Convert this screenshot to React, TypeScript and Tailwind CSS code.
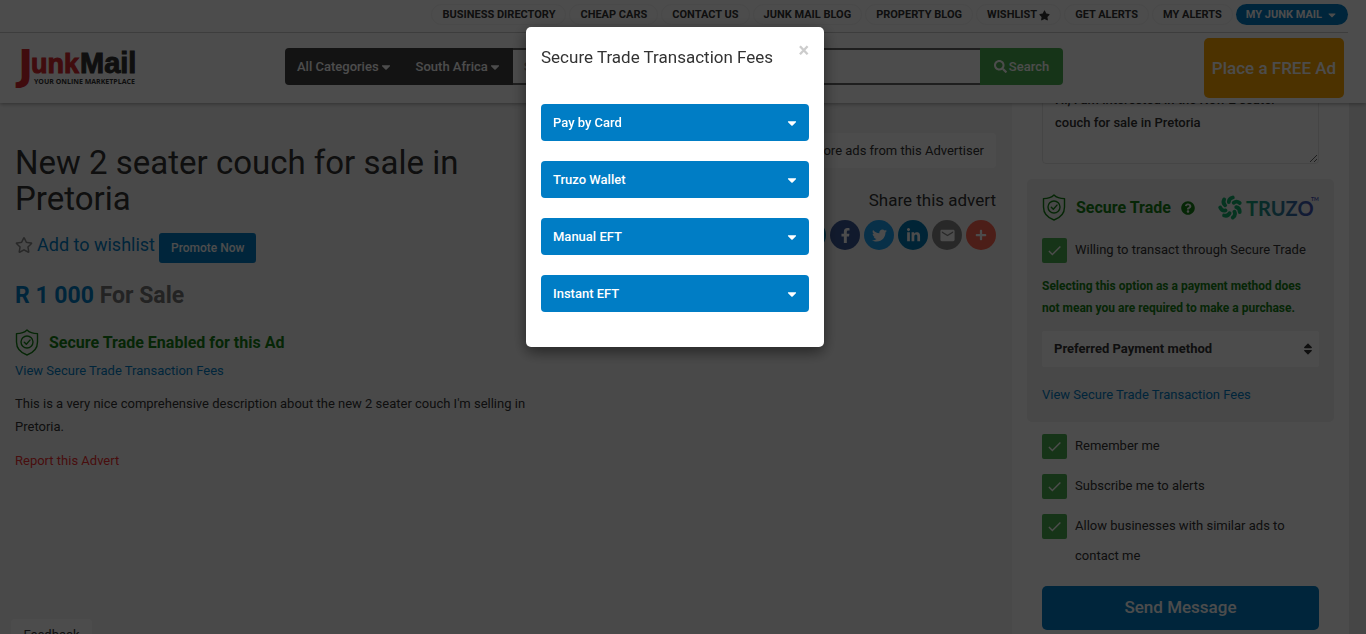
import type { ReactNode } from 'react';
import { FaCaretDown, FaFacebookF, FaFacebookMessenger, FaLinkedinIn, FaPlus, FaQuestionCircle, FaRegStar, FaSearch, FaSort, FaStar, FaTwitter } from 'react-icons/fa';
import { MdCheck, MdEmail } from 'react-icons/md';

const NAV = ['Business Directory', 'Cheap Cars', 'Contact Us', 'Junk Mail Blog', 'Property Blog', 'Wishlist', 'Get Alerts', 'My Alerts'];

const FEES = ['Pay by Card', 'Truzo Wallet', 'Manual EFT', 'Instant EFT'];

const SHARE: { label: string; bg: string; icon: ReactNode }[] = [
  { label: 'Messenger', bg: 'bg-[#0084b4]', icon: <FaFacebookMessenger size={16} /> },
  { label: 'Facebook',  bg: 'bg-[#3b5998]', icon: <FaFacebookF size={15} /> },
  { label: 'Twitter',   bg: 'bg-[#1da1f2]', icon: <FaTwitter size={15} /> },
  { label: 'LinkedIn',  bg: 'bg-[#007bb5]', icon: <FaLinkedinIn size={15} /> },
  { label: 'Email',     bg: 'bg-[#888888]', icon: <MdEmail size={17} /> },
  { label: 'More',      bg: 'bg-[#ff6550]', icon: <FaPlus size={12} /> },
];

function Logo() {
  return (
    <svg width="126" height="42" viewBox="0 0 126 42" role="img" aria-label="JunkMail">
      <text x="4" y="32" fontSize="41" fontWeight="700" fill="#d7282f" fontFamily="'DejaVu Sans', sans-serif">J</text>
      <g fontFamily="'Liberation Sans', sans-serif" fontWeight="700" strokeWidth="1">
        <text x="17" y="26" fontSize="27" fill="#d7282f" stroke="#d7282f">unk</text>
        <text x="66" y="26" fontSize="29" fill="#333" stroke="#333">Mail</text>
      </g>
      <text x="20" y="37" fontSize="7" fontWeight="700" fill="#333" fontFamily="'Open Sans', sans-serif">YOUR ONLINE MARKETPLACE</text>
    </svg>
  );
}

function Shield() {
  return (
    <svg width="24" height="27" viewBox="0 0 24 27" fill="none" stroke="#148014" strokeWidth="1.4" strokeLinecap="round" strokeLinejoin="round">
      <path d="M12 1c2.500 2.600 6.200 3.600 10.500 3.600V13c0 6.500-4.300 10.800-10.500 13C5.800 23.800 1.500 19.500 1.500 13V4.600C5.800 4.600 9.500 3.600 12 1Z" />
      <circle cx="12" cy="13" r="6" />
      <path d="m9.300 13.300 2 2 3.700-4.200" />
    </svg>
  );
}

function TruzoLogo() {
  return (
    <svg width="101" height="25" viewBox="0 0 101 25" role="img" aria-label="Truzo">
      <defs>
        <linearGradient id="truzo" x1="0" x2="1">
          <stop offset="0" stopColor="#12a878" />
          <stop offset="1" stopColor="#4350b8" />
        </linearGradient>
      </defs>
      <g stroke="#12b06c" strokeWidth="3.800" strokeLinecap="round" fill="none">
        {[0, 51, 103, 154, 206, 257, 309].map(a => (
          <path key={a} d="M10.800 7C10.800 4.600 12.300 3 14.800 2.500" transform={`rotate(${a} 12.5 12.5)`} />
        ))}
      </g>
      <text x="28" y="21" fontSize="20" fontWeight="700" fill="url(#truzo)" fontFamily="Lato, sans-serif">TRUZO</text>
      <text x="93" y="6" fontSize="5" fontWeight="700" fill="#4350b8" fontFamily="Lato, sans-serif">TM</text>
    </svg>
  );
}

function Check({ children }: { children: ReactNode }) {
  return (
    <label className="flex items-start gap-2 text-[13px] leading-[30px]">
      <span className="grid shrink-0 place-items-center">
        <input type="checkbox" defaultChecked className="col-start-1 row-start-1 size-[25px] appearance-none rounded-xs bg-[#4caf50]" />
        <MdCheck size={17} className="pointer-events-none col-start-1 row-start-1 text-white" />
      </span>
      <span className="-mt-[3px]">{children}</span>
    </label>
  );
}

function Header() {
  return (
    <header className="relative z-10 h-[103px] shrink-0 bg-white pr-[18px] shadow-[0_1px_4px_rgba(0,0,0,0.35)]">
      <nav className="flex h-[33px] items-start justify-end gap-[3px] border-b border-[#ccc] pt-1 text-[11px] font-bold uppercase">
        {NAV.map(item => (
          <a key={item} href="#" className="flex h-[21px] items-center gap-[2px] rounded-full border border-[#f3f3f3] px-[10px] pt-px">
            {item}
            {item === 'Wishlist' && <FaStar size={11} />}
          </a>
        ))}
        <button className="flex h-[21px] items-center gap-1 rounded-full bg-[#007dc5] px-[10px] pt-px font-bold uppercase text-white">
          My Junk Mail <FaCaretDown size={12} />
        </button>
      </nav>

      <div className="flex items-start">
        <a href="#" className="ml-[14px] mt-[14px] w-[271px] shrink-0"><Logo /></a>
        <form className="mt-[15px] flex h-[37px] w-[778px] overflow-hidden rounded-sm text-[13px] font-medium">
          <button type="button" className="flex items-center bg-[#404040] pl-3 text-white">All Categories <FaCaretDown size={14} /></button>
          <button type="button" className="flex items-center bg-[#404040] pl-[23px] pr-[11px] text-white">South Africa <FaCaretDown size={14} /></button>
          <input aria-label="Search" placeholder="Search for..." className="min-w-0 flex-1 border-y-2 border-[#666] bg-white px-[11px] placeholder:text-[#999]" />
          <button type="button" className="flex w-[83px] items-center justify-center gap-[2px] bg-[#4caf50] text-white"><FaSearch size={13} />Search</button>
        </form>
        <button className="ml-auto mr-1 mt-[5px] h-[60px] w-[140px] rounded-[5px] bg-[#ffa700] pt-px text-[17px] font-medium text-white">Place a FREE Ad</button>
      </div>
    </header>
  );
}

function Advert() {
  return (
    <main className="flex min-w-0 flex-1 justify-between pl-[15px] pr-4">
      <div className="w-[524px] pt-[42px]">
        <h1 className="text-[33px] leading-9">New 2 seater couch for sale in Pretoria</h1>
        <div className="mt-4 flex items-start gap-1">
          <a href="#" className="flex items-center gap-1 text-[18px] leading-6 text-[#007dc5]">
            <FaRegStar size={18} className="text-[#888]" /> Add to wishlist
          </a>
          <button className="h-[30px] rounded-[3px] bg-[#007dc5] px-3 text-[12px] font-medium text-white">Promote Now</button>
        </div>
        <p className="mt-[17px] text-[23px] font-bold leading-8 text-[#777]"><span className="text-[#007dc5]">R 1 000</span> For Sale</p>
        <div className="mt-4 flex items-center gap-[10px] text-[16px] font-bold leading-7 text-[#148014]">
          <Shield /> <span className="pt-px">Secure Trade Enabled for this Ad</span>
        </div>
        <a href="#" className="mt-[2px] block text-[13px] leading-[23px] text-[#007dc5]">View Secure Trade Transaction Fees</a>
        <p className="mt-[10px] text-[13px] leading-[23px]">This is a very nice comprehensive description about the new 2 seater couch I'm selling in Pretoria.</p>
        <a href="#" className="mt-[11px] block text-[13px] leading-[23px] text-[#f03030]">Report this Advert</a>
      </div>

      <div className="flex flex-col items-end pt-[30px]">
        <a href="#" className="rounded-sm bg-white px-3 text-[13px] leading-[35px]">More ads from this Advertiser</a>
        <h2 className="mt-5 text-[17px] leading-6">Share this advert</h2>
        <div className="mt-2 flex gap-1">
          {SHARE.map(s => (
            <button key={s.label} aria-label={s.label} className={`grid size-[30px] place-items-center rounded-full text-white ${s.bg}`}>{s.icon}</button>
          ))}
        </div>
      </div>
    </main>
  );
}

function ContactForm() {
  return (
    <aside className="w-[337px] shrink-0 bg-white px-[15px]">
      {/* first line of the message is scrolled under the header */}
      <div className="-mt-5 px-[15px]">
        <textarea
          aria-label="Message"
          defaultValue="Hi, I am interested in the New 2 seater couch for sale in Pretoria"
          className="block h-[81px] w-full rounded-sm border border-[#e8e8e8] px-3 pt-1 text-[13px] font-medium leading-[23px]"
        />
      </div>

      <section className="mt-[15px] rounded-[5px] bg-[#f0f0f0] px-[15px] pb-4 pt-[15px]">
        <div className="flex items-center text-[16px] font-bold text-[#148014]">
          <Shield />
          <span className="ml-[10px] pt-px">Secure Trade</span>
          <FaQuestionCircle size={14} className="ml-[10px]" />
          <span className="ml-auto"><TruzoLogo /></span>
        </div>
        <div className="mt-[17px]"><Check>Willing to transact through Secure Trade</Check></div>
        <p className="mt-[10px] text-[12px] font-bold leading-[22px] text-[#148014]">Selecting this option as a payment method does not mean you are required to make a purchase.</p>
        <div className="mt-3 grid items-center">
          <select aria-label="Preferred Payment method" className="col-start-1 row-start-1 h-9 w-full appearance-none rounded-xs bg-white px-3 text-[13px] font-bold">
            <option>Preferred Payment method</option>
          </select>
          <FaSort size={14} className="pointer-events-none col-start-1 row-start-1 mr-1 justify-self-end" />
        </div>
        <a href="#" className="mt-4 block text-[13px] leading-[23px] text-[#007dc5]">View Secure Trade Transaction Fees</a>
      </section>

      <div className="mt-3 flex flex-col gap-[13px] px-[15px]">
        <Check>Remember me</Check>
        <Check>Subscribe me to alerts</Check>
        <Check>Allow businesses with similar ads to contact me</Check>
        <button className="mt-[2px] h-11 rounded-[5px] bg-[#007dc5] text-[17px] font-medium text-white">Send Message</button>
      </div>
    </aside>
  );
}

function FeesModal() {
  return (
    <div className="fixed inset-0 z-30 flex items-start justify-center bg-black/70 pr-4 pt-[27px]">
      <div role="dialog" aria-label="Secure Trade Transaction Fees" className="w-[298px] rounded-[5px] bg-white px-[15px] pb-[35px] pt-[15px] shadow-[0_5px_15px_rgba(0,0,0,0.5)]">
        <div className="flex items-start justify-between">
          <h2 className="pt-[3px] text-[17px] leading-6">Secure Trade Transaction Fees</h2>
          <button aria-label="Close" className="text-[20px] font-bold leading-4 text-[#ccc]">×</button>
        </div>
        <div className="mt-[35px] flex flex-col gap-5">
          {FEES.map(fee => (
            <button key={fee} className="flex h-[37px] items-center justify-between rounded-sm bg-[#007dc5] pl-3 pr-[10px] text-[13px] font-medium text-white">
              {fee} <FaCaretDown size={14} />
            </button>
          ))}
        </div>
      </div>
    </div>
  );
}

export default function App() {
  return (
    <div className="flex h-screen flex-col overflow-hidden bg-[#ececec] font-['Roboto',sans-serif] text-[#333]">
      <Header />
      <div className="mr-[17px] flex min-h-0 flex-1 bg-[#f6f6f6]">
        <Advert />
        <ContactForm />
      </div>
      <button className="fixed -bottom-4 left-[11px] z-20 h-[31px] w-[81px] rounded-t-sm bg-white text-[13px]">Feedback</button>
      <FeesModal />
    </div>
  );
}
